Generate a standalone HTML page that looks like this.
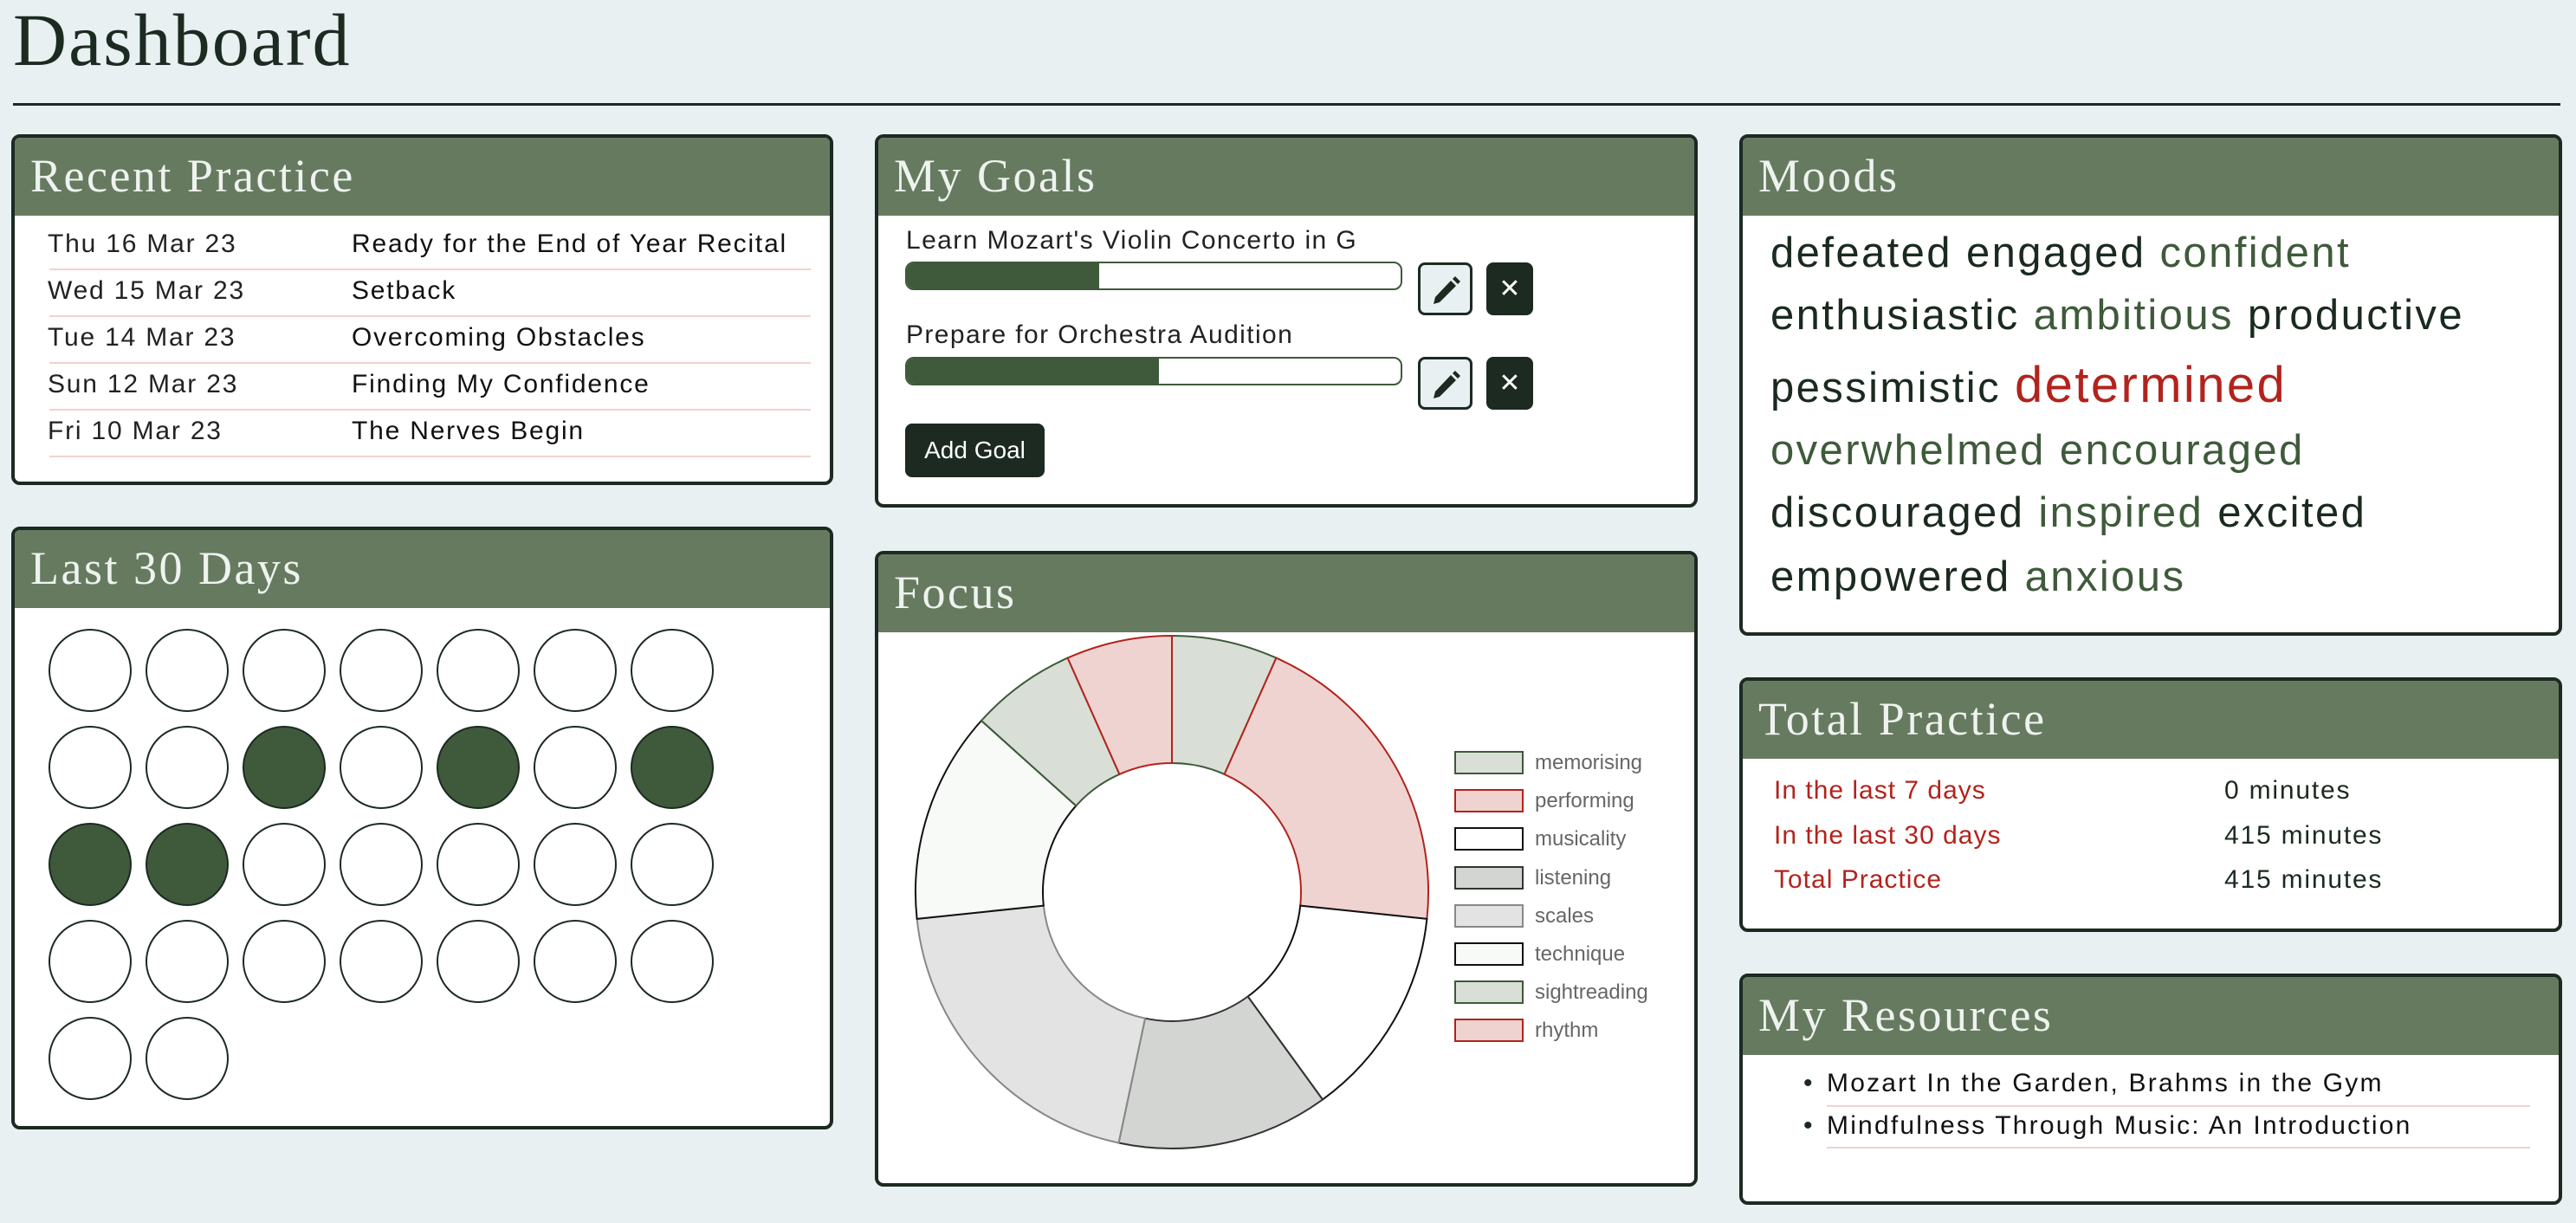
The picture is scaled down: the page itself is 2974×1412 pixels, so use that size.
<!DOCTYPE html>
<html><head><meta charset="utf-8"><style>
*{box-sizing:border-box;margin:0;padding:0}
body{width:2974px;height:1412px;background:#e8f0f1;position:relative;overflow:hidden;font-family:"Liberation Sans",sans-serif;color:#1a2a1f}
.abs{position:absolute}
h1{position:absolute;left:15px;top:-4px;font-family:"Liberation Serif",serif;font-weight:normal;font-size:86px;color:#1c2a22;letter-spacing:2px}
.rule{position:absolute;left:15px;top:119px;width:2941px;height:3px;background:#1c2a22}
.card{position:absolute;border:4px solid #1c2a22;border-radius:10px;background:#fff;overflow:hidden}
.hd{height:90px;background:#667a60;color:#eef3ef;font-family:"Liberation Serif",serif;font-size:54px;line-height:88px;padding-left:18px;letter-spacing:2.5px}
.t{position:absolute;white-space:nowrap;letter-spacing:1.8px}
.tt{color:#111}
.row{position:absolute;left:40px;width:879px;height:2px;background:#f0d2ce}
.c{position:absolute;width:96px;height:96px;border:2px solid #1c2a22;border-radius:50%;background:#fff}
.c.f{background:#3e5a3a}
.bar{position:absolute;height:33px;border:2px solid #3e5a3a;border-radius:10px;background:#fff;overflow:hidden}
.bar div{height:100%;background:#3e5a3a}
.eb{position:absolute;width:63px;height:61px;border:3px solid #1c2a22;border-radius:8px;background:#e8f0f1}
.xb{position:absolute;width:54px;height:61px;border-radius:8px;background:#1c2a22;color:#fff;font-size:30px;text-align:center;line-height:61px}
.mood{position:absolute;left:32px;font-size:49px;white-space:nowrap;letter-spacing:2.4px}
.g{color:#3e5a3a}.r{color:#b2231c}
.lg{position:absolute;left:1679px;width:80px;height:27px;border:2px solid}
.lt{position:absolute;left:1772px;font-size:24px;color:#666}
</style></head><body>
<h1>Dashboard</h1>
<div class="rule"></div>

<!-- Recent Practice -->
<div class="card" style="left:13px;top:155px;width:949px;height:405px">
<div class="hd">Recent Practice</div>
<div class="t" style="left:38px;top:106px;font-size:30px;color:#222">Thu 16 Mar 23</div>
<div class="t tt" style="left:389px;top:106px;font-size:30px">Ready for the End of Year Recital</div>
<div class="row" style="top:151px"></div>
<div class="t" style="left:38px;top:160px;font-size:30px;color:#222">Wed 15 Mar 23</div>
<div class="t tt" style="left:389px;top:160px;font-size:30px">Setback</div>
<div class="row" style="top:205px"></div>
<div class="t" style="left:38px;top:214px;font-size:30px;color:#222">Tue 14 Mar 23</div>
<div class="t tt" style="left:389px;top:214px;font-size:30px">Overcoming Obstacles</div>
<div class="row" style="top:259px"></div>
<div class="t" style="left:38px;top:268px;font-size:30px;color:#222">Sun 12 Mar 23</div>
<div class="t tt" style="left:389px;top:268px;font-size:30px">Finding My Confidence</div>
<div class="row" style="top:313px"></div>
<div class="t" style="left:38px;top:322px;font-size:30px;color:#222">Fri 10 Mar 23</div>
<div class="t tt" style="left:389px;top:322px;font-size:30px">The Nerves Begin</div>
<div class="row" style="top:367px"></div>
</div>

<!-- Last 30 Days -->
<div class="card" style="left:13px;top:608px;width:949px;height:696px">
<div class="hd">Last 30 Days</div>
<div class="c" style="left:39px;top:114px"></div><div class="c" style="left:151px;top:114px"></div><div class="c" style="left:263px;top:114px"></div><div class="c" style="left:375px;top:114px"></div><div class="c" style="left:487px;top:114px"></div><div class="c" style="left:599px;top:114px"></div><div class="c" style="left:711px;top:114px"></div>
<div class="c" style="left:39px;top:226px"></div><div class="c" style="left:151px;top:226px"></div><div class="c f" style="left:263px;top:226px"></div><div class="c" style="left:375px;top:226px"></div><div class="c f" style="left:487px;top:226px"></div><div class="c" style="left:599px;top:226px"></div><div class="c f" style="left:711px;top:226px"></div>
<div class="c f" style="left:39px;top:338px"></div><div class="c f" style="left:151px;top:338px"></div><div class="c" style="left:263px;top:338px"></div><div class="c" style="left:375px;top:338px"></div><div class="c" style="left:487px;top:338px"></div><div class="c" style="left:599px;top:338px"></div><div class="c" style="left:711px;top:338px"></div>
<div class="c" style="left:39px;top:450px"></div><div class="c" style="left:151px;top:450px"></div><div class="c" style="left:263px;top:450px"></div><div class="c" style="left:375px;top:450px"></div><div class="c" style="left:487px;top:450px"></div><div class="c" style="left:599px;top:450px"></div><div class="c" style="left:711px;top:450px"></div>
<div class="c" style="left:39px;top:562px"></div><div class="c" style="left:151px;top:562px"></div>
</div>

<!-- My Goals -->
<div class="card" style="left:1010px;top:155px;width:950px;height:431px">
<div class="hd">My Goals</div>
</div>
<div class="t" style="left:1046px;top:261px;font-size:30px;color:#222;letter-spacing:1.4px">Learn Mozart's Violin Concerto in G</div>
<div class="bar" style="left:1045px;top:302px;width:574px"><div style="width:39%"></div></div>
<div class="eb" style="left:1637px;top:303px"><svg width="57" height="55" viewBox="0 0 57 55"><path d="M35 18 L41 24 L22 43 L15 45 L17 37 Z" fill="#1c2a22"/><path d="M37 16 L40 13 L46 19 L43 22 Z" fill="#1c2a22"/></svg></div>
<div class="xb" style="left:1716px;top:303px">✕</div>
<div class="t" style="left:1046px;top:370px;font-size:30px;color:#222;letter-spacing:1.4px">Prepare for Orchestra Audition</div>
<div class="bar" style="left:1045px;top:412px;width:574px"><div style="width:51%"></div></div>
<div class="eb" style="left:1637px;top:412px"><svg width="57" height="55" viewBox="0 0 57 55"><path d="M35 18 L41 24 L22 43 L15 45 L17 37 Z" fill="#1c2a22"/><path d="M37 16 L40 13 L46 19 L43 22 Z" fill="#1c2a22"/></svg></div>
<div class="xb" style="left:1716px;top:412px">✕</div>
<div class="abs" style="left:1045px;top:489px;width:161px;height:62px;background:#1c2a22;border-radius:8px;color:#fff;font-size:28px;line-height:62px;text-align:center">Add Goal</div>

<!-- Focus -->
<div class="card" style="left:1010px;top:636px;width:950px;height:734px">
<div class="hd">Focus</div>
</div>
<svg class="abs" style="left:0;top:0" width="2974" height="1412">
<g transform="translate(1353,1030)" stroke-width="2">
<path d="M0,-296 A296,296 0 0 1 120.4,-270.4 L60.6,-136.1 A149,149 0 0 0 0,-149 Z" fill="#d9dfd6" stroke="#3e5a3a"/>
<path d="M120.4,-270.4 A296,296 0 0 1 294.4,30.9 L148.2,15.6 A149,149 0 0 0 60.6,-136.1 Z" fill="#efd3d1" stroke="#b2231c"/>
<path d="M294.4,30.9 A296,296 0 0 1 174,239.5 L87.6,120.5 A149,149 0 0 0 148.2,15.6 Z" fill="#fff" stroke="#111"/>
<path d="M174,239.5 A296,296 0 0 1 -61.5,289.5 L-31,145.7 A149,149 0 0 0 87.6,120.5 Z" fill="#d3d5d3" stroke="#333"/>
<path d="M-61.5,289.5 A296,296 0 0 1 -294.4,30.9 L-148.2,15.6 A149,149 0 0 0 -31,145.7 Z" fill="#e3e3e3" stroke="#888"/>
<path d="M-294.4,30.9 A296,296 0 0 1 -220,-198 L-110.7,-99.7 A149,149 0 0 0 -148.2,15.6 Z" fill="#f8faf8" stroke="#111"/>
<path d="M-220,-198 A296,296 0 0 1 -120.4,-270.4 L-60.6,-136.1 A149,149 0 0 0 -110.7,-99.7 Z" fill="#d9dfd6" stroke="#3e5a3a"/>
<path d="M-120.4,-270.4 A296,296 0 0 1 0,-296 L0,-149 A149,149 0 0 0 -60.6,-136.1 Z" fill="#efd3d1" stroke="#b2231c"/>
</g></svg>
<div class="lg" style="top:867px;background:#d9dfd6;border-color:#3e5a3a"></div><div class="lt" style="top:867px">memorising</div>
<div class="lg" style="top:911px;background:#efd3d1;border-color:#b2231c"></div><div class="lt" style="top:911px">performing</div>
<div class="lg" style="top:955px;background:#fff;border-color:#111"></div><div class="lt" style="top:955px">musicality</div>
<div class="lg" style="top:1000px;background:#d3d5d3;border-color:#333"></div><div class="lt" style="top:1000px">listening</div>
<div class="lg" style="top:1044px;background:#e3e3e3;border-color:#888"></div><div class="lt" style="top:1044px">scales</div>
<div class="lg" style="top:1088px;background:#f8faf8;border-color:#111"></div><div class="lt" style="top:1088px">technique</div>
<div class="lg" style="top:1132px;background:#d9dfd6;border-color:#3e5a3a"></div><div class="lt" style="top:1132px">sightreading</div>
<div class="lg" style="top:1176px;background:#efd3d1;border-color:#b2231c"></div><div class="lt" style="top:1176px">rhythm</div>

<!-- Moods -->
<div class="card" style="left:2008px;top:155px;width:950px;height:579px">
<div class="hd">Moods</div>
<div class="mood" style="top:105px">defeated engaged <span class="g">confident</span></div>
<div class="mood" style="top:177px">enthusiastic <span class="g">ambitious</span> productive</div>
<div class="mood" style="top:252px">pessimistic <span class="r" style="font-size:58px">determined</span></div>
<div class="mood g" style="top:333px">overwhelmed encouraged</div>
<div class="mood" style="top:405px">discouraged <span class="g">inspired</span> excited</div>
<div class="mood" style="top:479px">empowered <span class="g">anxious</span></div>
</div>

<!-- Total Practice -->
<div class="card" style="left:2008px;top:782px;width:950px;height:294px">
<div class="hd">Total Practice</div>
<div class="t r" style="left:36px;top:110px;font-size:30px;letter-spacing:1px">In the last 7 days</div><div class="t" style="left:556px;top:110px;font-size:30px">0 minutes</div>
<div class="t r" style="left:36px;top:162px;font-size:30px;letter-spacing:1px">In the last 30 days</div><div class="t" style="left:556px;top:162px;font-size:30px">415 minutes</div>
<div class="t r" style="left:36px;top:213px;font-size:30px;letter-spacing:1px">Total Practice</div><div class="t" style="left:556px;top:213px;font-size:30px">415 minutes</div>
</div>

<!-- My Resources -->
<div class="card" style="left:2008px;top:1124px;width:950px;height:267px">
<div class="hd">My Resources</div>
<div class="t" style="left:70px;top:106px;font-size:30px">•</div>
<div class="t tt" style="left:97px;top:106px;font-size:30px;letter-spacing:2.2px">Mozart In the Garden, Brahms in the Gym</div>
<div class="abs" style="left:97px;top:148px;width:812px;height:2px;background:#f0d2ce"></div>
<div class="t" style="left:70px;top:155px;font-size:30px">•</div>
<div class="t tt" style="left:97px;top:155px;font-size:30px;letter-spacing:2.2px">Mindfulness Through Music: An Introduction</div>
<div class="abs" style="left:97px;top:196px;width:812px;height:2px;background:#f0d2ce"></div>
</div>
</body></html>
